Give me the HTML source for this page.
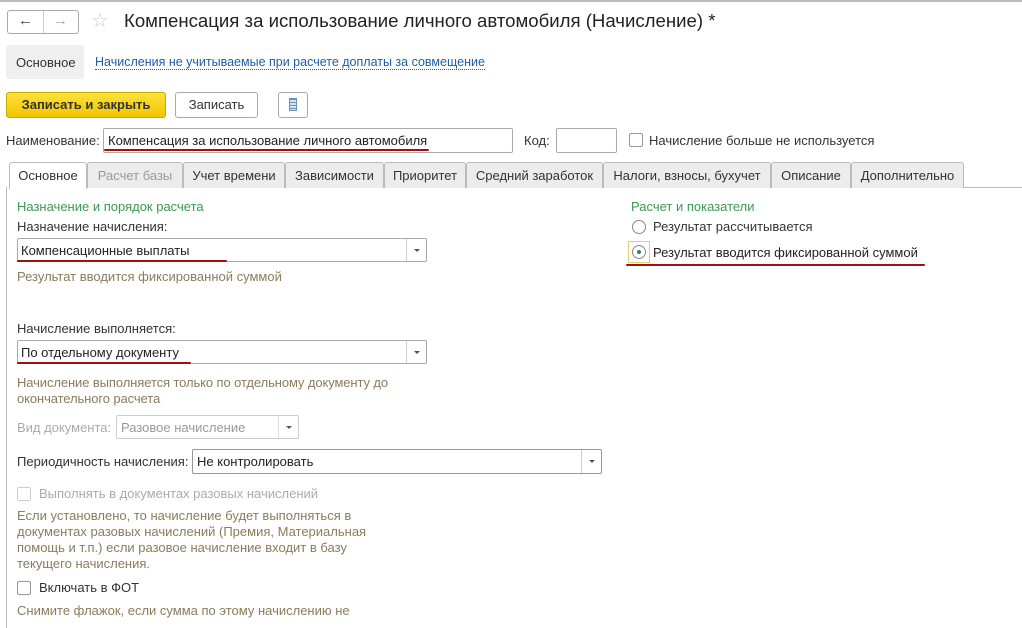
<!DOCTYPE html>
<html><head><meta charset="utf-8"><style>
*{box-sizing:border-box}
body{margin:0;width:1022px;height:628px;overflow:hidden;background:#fff;font-family:"Liberation Sans",Arial,sans-serif;font-size:13px;color:#333;position:relative}
.a{position:absolute;white-space:nowrap}
.box{position:absolute;border:1px solid #aaa;border-radius:2px;background:#fff}
.dd{position:absolute;top:0;right:0;width:20px;height:100%;border-left:1px solid #ccc}
.dd:after{content:"";position:absolute;left:7px;top:10px;border:3px solid transparent;border-top:3px solid #555}
.hint{color:#8a7c5c}
.green{color:#3a9a52}
.red{position:absolute;height:2px;background:#a01010;border-radius:1px}
.tab{position:absolute;top:162px;height:26px;border:1px solid #bbb;border-bottom:none;background:#ececec;border-radius:3px 3px 0 0;text-align:center;line-height:25px;font-size:13px}
.cb{position:absolute;width:14px;height:14px;border:1px solid #999;border-radius:2px;background:#fff}
</style></head><body>
<div class="a" style="left:0;top:0;width:1022px;height:2px;background:#bbb"></div>
<div class="box" style="left:7px;top:10px;width:72px;height:24px;border-radius:3px"></div>
<div class="a" style="left:43px;top:11px;width:1px;height:22px;background:#ccc"></div>
<div class="a" style="left:18px;top:12px;font-size:15px;font-weight:bold;color:#444">&#8592;</div>
<div class="a" style="left:53px;top:12px;font-size:15px;font-weight:bold;color:#aaa">&#8594;</div>
<div class="a" style="left:91px;top:8px;font-size:20px;color:#ccc">&#9734;</div>
<div class="a" style="left:124px;top:10px;font-size:18.6px;color:#222">Компенсация за использование личного автомобиля (Начисление) *</div>
<div class="a" style="left:6px;top:45px;width:78px;height:34px;background:#efefef;border-radius:3px"></div>
<div class="a" style="left:16px;top:55px">Основное</div>
<div class="a" style="left:95px;top:55px;font-size:12.5px;color:#1c5ea8;border-bottom:1px dotted #1c5ea8;line-height:14px">Начисления не учитываемые при расчете доплаты за совмещение</div>
<div class="a" style="left:6px;top:92px;width:160px;height:26px;background:linear-gradient(#fce23a,#f2c400);border:1px solid #c9a800;border-radius:3px;font-weight:bold;text-align:center;line-height:24px">Записать и закрыть</div>
<div class="a" style="left:175px;top:92px;width:83px;height:26px;background:#fff;border:1px solid #aaa;border-radius:3px;text-align:center;line-height:24px">Записать</div>
<div class="a" style="left:278px;top:92px;width:30px;height:26px;background:#fff;border:1px solid #aaa;border-radius:3px"></div>
<div class="a" style="left:289px;top:98px;width:8px;height:13px;background:repeating-linear-gradient(#6c8fb5 0 1px,#d8e4f0 1px 3px);border:1px solid #6c8fb5"></div>
<div class="a" style="left:6px;top:133px">Наименование:</div>
<div class="box" style="left:103px;top:128px;width:410px;height:25px"></div>
<div class="a" style="left:108px;top:133px;color:#222">Компенсация за использование личного автомобиля</div>
<div class="red" style="left:104px;top:149px;width:325px"></div>
<div class="a" style="left:524px;top:133px">Код:</div>
<div class="box" style="left:556px;top:128px;width:61px;height:25px"></div>
<div class="cb" style="left:629px;top:133px"></div>
<div class="a" style="left:649px;top:133px">Начисление больше не используется</div>
<div class="a" style="left:87px;top:187px;width:935px;height:1px;background:#bbb"></div>
<div class="a" style="left:6px;top:187px;width:1px;height:441px;background:#bbb"></div>
<div class="tab" style="left:9px;width:78px;background:#fff;height:27px">Основное</div>
<div class="tab" style="left:87px;width:96px;color:#999">Расчет базы</div>
<div class="tab" style="left:183px;width:102px">Учет времени</div>
<div class="tab" style="left:285px;width:99px">Зависимости</div>
<div class="tab" style="left:384px;width:82px">Приоритет</div>
<div class="tab" style="left:466px;width:137px">Средний заработок</div>
<div class="tab" style="left:603px;width:168px">Налоги, взносы, бухучет</div>
<div class="tab" style="left:771px;width:80px">Описание</div>
<div class="tab" style="left:851px;width:113px">Дополнительно</div>
<div class="a green" style="left:17px;top:199px">Назначение и порядок расчета</div>
<div class="a" style="left:17px;top:219px">Назначение начисления:</div>
<div class="box" style="left:17px;top:238px;width:410px;height:24px"><div class="dd"></div></div>
<div class="a" style="left:21px;top:243px;color:#222">Компенсационные выплаты</div>
<div class="red" style="left:17px;top:260px;width:210px"></div>
<div class="a hint" style="left:17px;top:269px">Результат вводится фиксированной суммой</div>
<div class="a" style="left:17px;top:321px">Начисление выполняется:</div>
<div class="box" style="left:17px;top:340px;width:410px;height:24px"><div class="dd"></div></div>
<div class="a" style="left:21px;top:345px;color:#222">По отдельному документу</div>
<div class="red" style="left:17px;top:362px;width:174px"></div>
<div class="a hint" style="left:17px;top:375px;line-height:16px;letter-spacing:-0.1px">Начисление выполняется только по отдельному документу до<br>окончательного расчета</div>
<div class="a" style="left:17px;top:420px;color:#aaa">Вид документа:</div>
<div class="box" style="left:116px;top:415px;width:183px;height:24px;border-color:#ccc"><div class="dd" style="border-color:#ddd"></div></div>
<div class="a" style="left:121px;top:420px;color:#999">Разовое начисление</div>
<div class="a" style="left:17px;top:454px">Периодичность начисления:</div>
<div class="box" style="left:192px;top:449px;width:410px;height:25px;border-color:#999"><div class="dd"></div></div>
<div class="a" style="left:197px;top:454px;color:#222">Не контролировать</div>
<div class="cb" style="left:17px;top:487px;border-color:#ccc"></div>
<div class="a" style="left:39px;top:486px;color:#aaa">Выполнять в документах разовых начислений</div>
<div class="a hint" style="left:17px;top:508px;line-height:16px">Если установлено, то начисление будет выполняться в<br>документах разовых начислений (Премия, Материальная<br>помощь и т.п.) если разовое начисление входит в базу<br>текущего начисления.</div>
<div class="cb" style="left:17px;top:581px"></div>
<div class="a" style="left:39px;top:580px">Включать в ФОТ</div>
<div class="a hint" style="left:17px;top:603px">Снимите флажок, если сумма по этому начислению не</div>
<div class="a green" style="left:631px;top:199px">Расчет и показатели</div>
<div class="a" style="left:632px;top:220px;width:14px;height:14px;border:1px solid #888;border-radius:50%"></div>
<div class="a" style="left:653px;top:219px">Результат рассчитывается</div>
<div class="a" style="left:628px;top:241px;width:22px;height:22px;border:1px solid #e6d26a"></div>
<div class="a" style="left:632px;top:245px;width:14px;height:14px;border:1px solid #888;border-radius:50%"></div>
<div class="a" style="left:637px;top:250px;width:4px;height:4px;background:#2a8a4a;border-radius:50%"></div>
<div class="a" style="left:653px;top:245px;color:#222">Результат вводится фиксированной суммой</div>
<div class="red" style="left:626px;top:264px;width:299px"></div>
</body></html>
